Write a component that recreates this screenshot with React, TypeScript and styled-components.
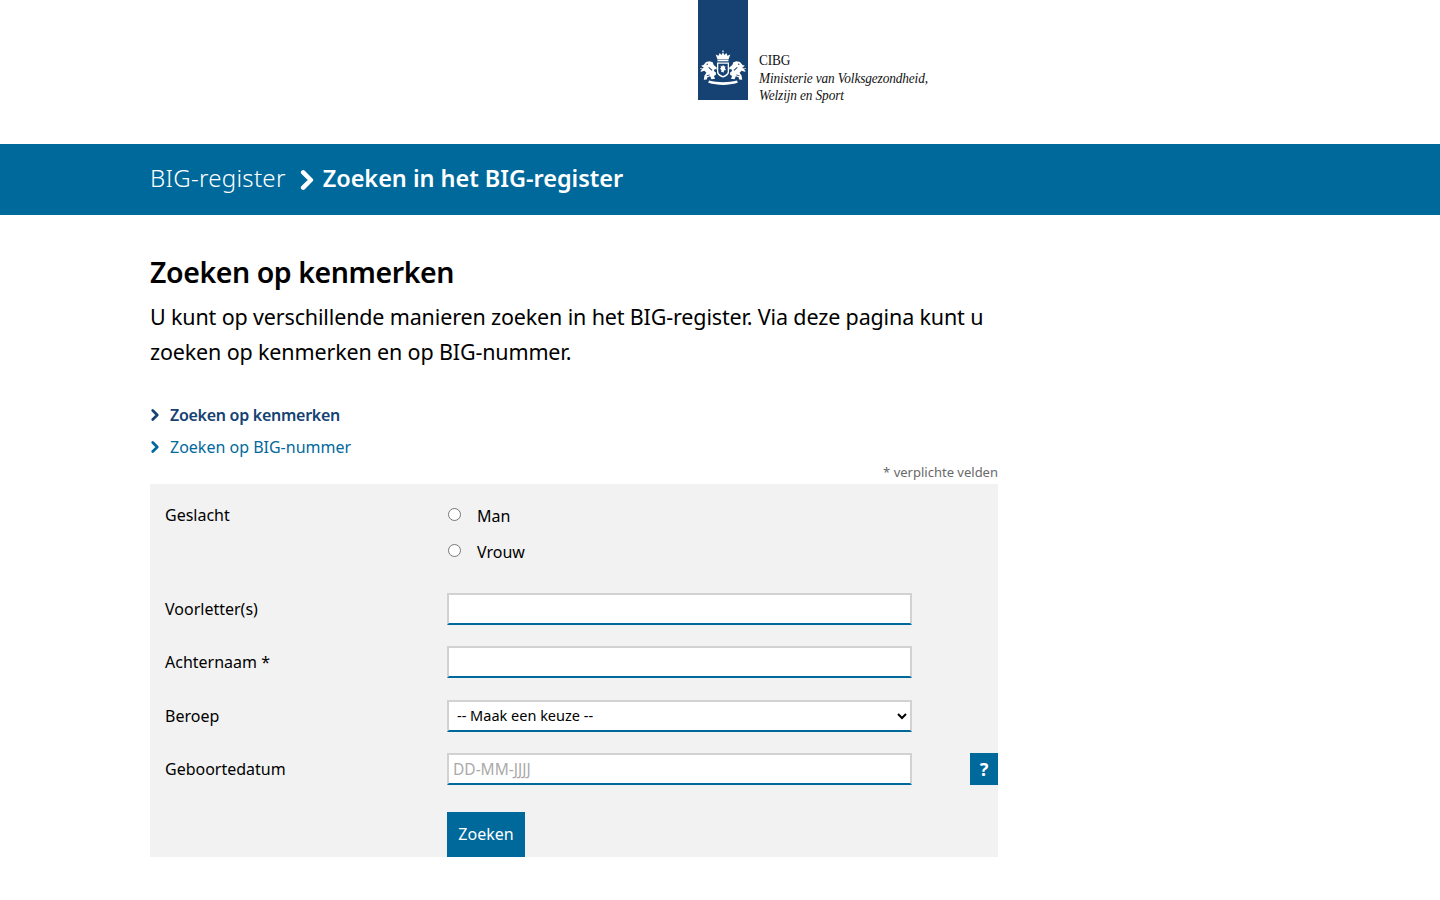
import React from "react";
import styled, { createGlobalStyle } from "styled-components";

const Global = createGlobalStyle`
  html, body { margin: 0; padding: 0; background: #fff; }
  body { font-family: "Noto Sans", "Open Sans", sans-serif; color: #000; overflow: hidden; }
  * { box-sizing: border-box; }
`;

const Page = styled.div`
  width: 1440px;
  height: 900px;
  display: flex;
  flex-direction: column;
`;
const Masthead = styled.header`
  height: 144px;
  padding-left: 698px;
  display: flex;
  align-items: flex-start;
`;
const Ribbon = styled.div`
  width: 50px;
  height: 100px;
  background: #154273;
  display: flex;
  align-items: flex-end;
  justify-content: center;
  padding-bottom: 15px;
`;
const Wordmark = styled.div`
  margin: 51px 0 0 11px;
  font-family: "Liberation Serif", serif;
  font-size: 15.5px;
  line-height: 17.5px;
  color: #111;
  transform: scaleX(0.86);
  transform-origin: left top;
`;
const WordLine = styled.div<{ $italic?: boolean }>`
  white-space: nowrap;
  font-style: ${(p) => (p.$italic ? "italic" : "normal")};
  letter-spacing: -0.15px;
`;
const Band = styled.nav`
  height: 71px;
  background: #00699c;
  color: #fff;
  padding: 0 0 4px 150px;
  display: flex;
  align-items: center;
`;
const Crumb = styled.span`
  font-size: 24px;
  font-weight: 300;
  letter-spacing: 0.3px;
`;
const CrumbArrow = styled.svg`
  width: 14px;
  height: 22px;
  margin: 4px 9px 0 14px;
`;
const Current = styled.span`
  font-size: 23.5px;
  font-weight: 600;
  letter-spacing: -0.03px;
`;
const Main = styled.main`
  width: 848px;
  margin-left: 150px;
  padding-top: 37px;
`;
const Title = styled.h1`
  margin: 0;
  font-size: 28.5px;
  line-height: 40px;
  font-weight: 600;
  letter-spacing: -0.43px;
`;
const Intro = styled.p`
  margin: 7px 0 0;
  font-size: 21.5px;
  line-height: 35px;
  letter-spacing: -0.15px;
  white-space: nowrap;
`;
const Links = styled.ul`
  list-style: none;
  margin: 30px 0 0;
  padding: 0;
`;
const LinkRow = styled.li<{ $active?: boolean }>`
  height: 32px;
  display: flex;
  align-items: center;
  gap: 10px;
  font-size: 16px;
  font-weight: ${(p) => (p.$active ? 600 : 400)};
  color: ${(p) => (p.$active ? "#154273" : "#00699c")};
  letter-spacing: ${(p) => (p.$active ? "-0.28px" : "0")};
`;
const LinkArrow = styled.svg`
  width: 10px;
  height: 12px;
  flex: none;
`;
const Required = styled.div`
  text-align: right;
  font-size: 13px;
  line-height: 18px;
  height: 21px;
  color: #696969;
`;
const Panel = styled.form`
  height: 373px;
  background: #f2f2f2;
  padding: 15px 0 0 15px;
  display: flex;
  flex-direction: column;
`;
const Row = styled.div<{ $h: number }>`
  height: ${(p) => p.$h}px;
  display: grid;
  grid-template-columns: 282px 465px 58px 28px;
  align-items: start;
`;
const Label = styled.label`
  font-size: 16px;
  line-height: 32px;
  white-space: nowrap;
`;
const Choices = styled.div`
  display: flex;
  flex-direction: column;
  margin-top: -1px;
`;
const Choice = styled.label`
  height: 36px;
  display: flex;
  align-items: center;
  font-size: 16px;
`;
const Radio = styled.input`
  width: 13px;
  height: 13px;
  margin: -3px 16px 0 1px;
  flex: none;
`;
const TextField = styled.input`
  width: 465px;
  height: 32px;
  background: #fff;
  border-style: solid;
  border-width: 2px;
  border-color: #d2d2d2 #d2d2d2 #00699c;
  padding: 0 4px;
  font-family: inherit;
  font-size: 15.5px;
  border-radius: 0;
  outline: none;
  &::placeholder { color: #aaa; opacity: 1; }
`;
const Select = styled.select`
  width: 465px;
  height: 32px;
  background: #fff;
  border-style: solid;
  border-width: 2px;
  border-color: #d2d2d2 #d2d2d2 #00699c;
  padding: 0 4px 2px;
  font-family: inherit;
  font-size: 14.5px;
  color: #000;
  border-radius: 0;
`;
const Help = styled.button`
  grid-column: 4;
  width: 28px;
  height: 32px;
  border: 0;
  padding: 0;
  background: #00699c;
  color: #fff;
  font-family: inherit;
  font-size: 18px;
  font-weight: 700;
`;
const Submit = styled.button`
  grid-column: 2;
  justify-self: start;
  width: 78px;
  height: 45px;
  border: 0;
  padding: 0 0 2px;
  background: #00699c;
  color: #fff;
  font-family: inherit;
  font-size: 16px;
`;

const lion =
  "M2.500 15l2.500-3 3.500-.8 3.200 1 1 2.800 3 2.500v2l-2-.4-.8 2 2 1.400v2.200l-2 1.300 1.200 2.800-3.700.4-1.200-3-2.800 1-.6 2.400-3 .2.600-4 2-3-2-2-3.600 1 1-2.600 2-1.400-2.700-2z";

const LionSide = () => (
  <>
    <path d={lion} />
    <path d="M-1 18.500l4 .4M-.5 21l3.500-.6" stroke="#fff" strokeWidth=".7" fill="none" />
    <circle cx="6.200" cy="14.200" r=".7" fill="#154273" />
    <path d="M8 17l3.500 3-.7.7-3.500-3zM5.500 25.500l3-1 .3.800-3 1z" fill="#154273" />
  </>
);

const Crest = () => (
  <svg width="46" height="35" viewBox="0 0 46 35" fill="#fff" aria-hidden="true">
    <g transform="translate(1 0)">
      <path d="M22 0l.8 1.300-.8 1.300-.8-1.300z" />
      <path d="M16.500 9.500l-1.800-5 2.800 1.200 1.200-2.700 1.800 2.100 1.500-2.900 1.500 2.900 1.800-2.100 1.200 2.700 2.800-1.200-1.800 5z" />
      <rect x="16.500" y="10" width="11" height="1.300" />
      <path d="M16 12.500h12v9.500c0 3-3.200 4.600-6 5.600-2.800-1-6-2.600-6-5.600z" />
      <path d="M17.300 13.800h9.400v8c0 2-2.600 3.400-4.700 4.200-2.100-.8-4.700-2.200-4.700-4.200z" fill="#154273" />
      <path d="M19.500 15.500l1.500 1 1-1.500 1.400 1.500 1-.5-.4 2.400 1 1.500-2 .5-.5 2.400-1.500-1-1 .5.500-2-1.500-1.500 1-1z" />
      <LionSide />
      <g transform="translate(44 0) scale(-1 1)">
        <LionSide />
      </g>
      <path d="M8 30.500c4.500 1.200 9 1.700 14 1.700s9.500-.5 14-1.700l.8 2.300c-4.800 1.400-9.800 2.100-14.800 2.100s-10-.7-14.800-2.100z" />
    </g>
  </svg>
);

const Chevron = () => (
  <path d="M2.500 2 L8.500 8 L2.500 14" fill="none" stroke="currentColor" strokeWidth="3.600" strokeLinecap="round" strokeLinejoin="round" />
);

export default function App() {
  return (
    <Page>
      <Global />
      <Masthead>
        <Ribbon><Crest /></Ribbon>
        <Wordmark>
          <WordLine>CIBG</WordLine>
          <WordLine $italic>Ministerie van Volksgezondheid,</WordLine>
          <WordLine $italic>Welzijn en Sport</WordLine>
        </Wordmark>
      </Masthead>
      <Band>
        <Crumb>BIG-register</Crumb>
        <CrumbArrow viewBox="0 0 11 16"><Chevron /></CrumbArrow>
        <Current>Zoeken in het BIG-register</Current>
      </Band>
      <Main>
        <Title>Zoeken op kenmerken</Title>
        <Intro>
          U kunt op verschillende manieren zoeken in het BIG-register. Via deze pagina kunt u
          <br />
          zoeken op kenmerken en op BIG-nummer.
        </Intro>
        <Links>
          <LinkRow $active><LinkArrow viewBox="0 0 11 16"><Chevron /></LinkArrow>Zoeken op kenmerken</LinkRow>
          <LinkRow><LinkArrow viewBox="0 0 11 16"><Chevron /></LinkArrow>Zoeken op BIG-nummer</LinkRow>
        </Links>
        <Required>* verplichte velden</Required>
        <Panel onSubmit={(e) => e.preventDefault()}>
          <Row $h={94}>
            <Label>Geslacht</Label>
            <Choices>
              <Choice><Radio type="radio" name="g" />Man</Choice>
              <Choice><Radio type="radio" name="g" />Vrouw</Choice>
            </Choices>
          </Row>
          <Row $h={53}>
            <Label>Voorletter(s)</Label>
            <TextField />
          </Row>
          <Row $h={54}>
            <Label>Achternaam *</Label>
            <TextField />
          </Row>
          <Row $h={53}>
            <Label>Beroep</Label>
            <Select defaultValue=""><option value="">-- Maak een keuze --</option></Select>
          </Row>
          <Row $h={59}>
            <Label>Geboortedatum</Label>
            <TextField placeholder="DD-MM-JJJJ" />
            <Help type="button">?</Help>
          </Row>
          <Row $h={45}>
            <Submit type="submit">Zoeken</Submit>
          </Row>
        </Panel>
      </Main>
    </Page>
  );
}
